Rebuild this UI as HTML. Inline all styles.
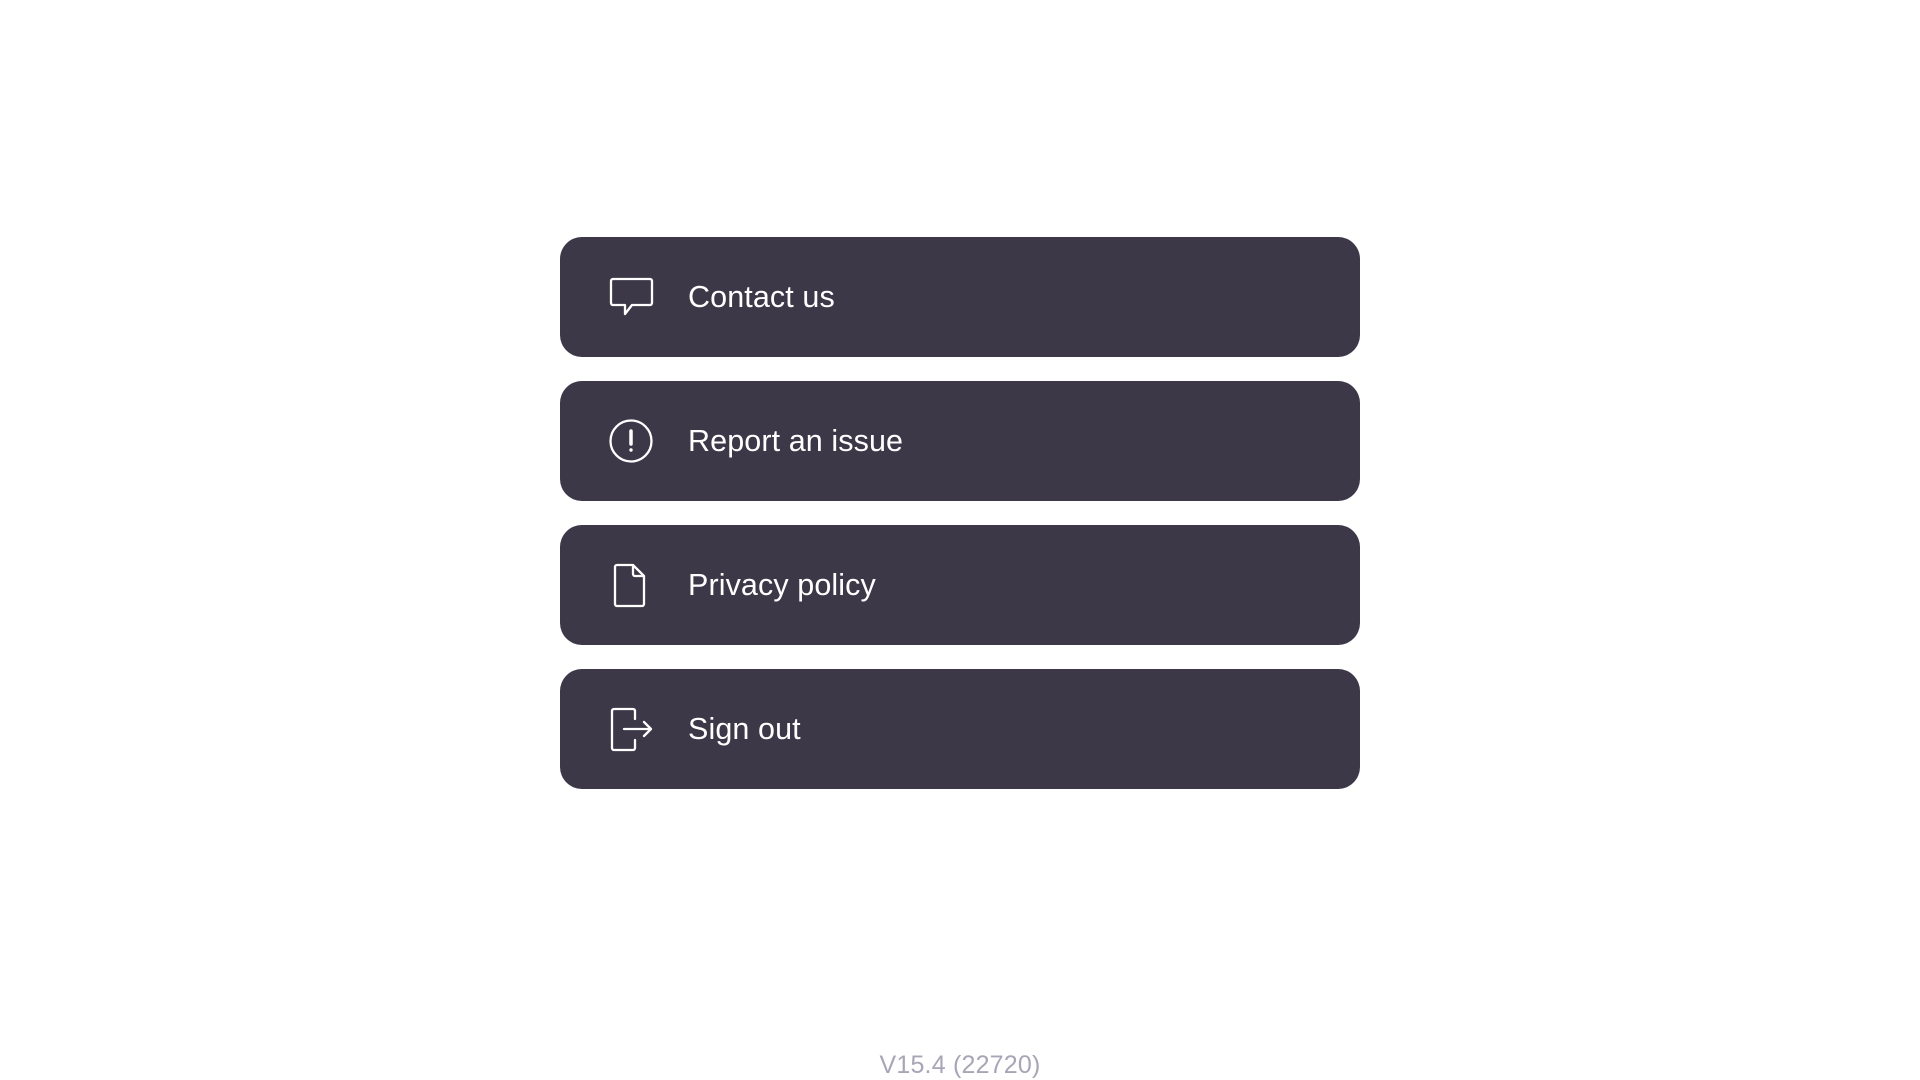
<!DOCTYPE html>
<html><head><meta charset="utf-8"><style>
html,body{margin:0;padding:0;width:1920px;height:1080px;background:#fff;overflow:hidden;font-family:"Liberation Sans",sans-serif}
.b{position:absolute;left:560px;width:800px;height:120px;background:#3c3848;border-radius:22px;color:#fff}
.b svg{position:absolute;left:48px;top:37px}
.b span{position:absolute;left:128px;top:0px;line-height:120px;font-size:30.5px;letter-spacing:0.1px}
.v{position:absolute;left:0;width:1920px;top:1051px;text-align:center;font-size:25px;color:#a8a5b6;letter-spacing:0.2px}
</style></head><body>
<div class="b" style="top:237px"><svg width="46" height="48" viewBox="0 0 46 48" fill="none" stroke="#fff" stroke-width="2.3" stroke-linejoin="round"><path d="M5 5h37a2 2 0 0 1 2 2v22a2 2 0 0 1-2 2H24l-7 9v-9H5a2 2 0 0 1-2-2V7a2 2 0 0 1 2-2z"/></svg><span>Contact us</span></div>
<div class="b" style="top:381px"><svg width="46" height="48" viewBox="0 0 46 48" fill="none" stroke="#fff" stroke-width="2.3"><circle cx="23" cy="23" r="20.5"/><path d="M23 13v13" stroke-width="3.5" stroke-linecap="round"/><circle cx="23" cy="32" r="1.7" fill="#fff" stroke="none"/></svg><span>Report an issue</span></div>
<div class="b" style="top:525px"><svg width="46" height="48" viewBox="0 0 46 48" fill="none" stroke="#fff" stroke-width="2.3" stroke-linejoin="round"><path d="M9 3h16l11 11v28a2 2 0 0 1-2 2H9a2 2 0 0 1-2-2V5a2 2 0 0 1 2-2z"/><path d="M25 3v9a2 2 0 0 0 2 2h9"/></svg><span>Privacy policy</span></div>
<div class="b" style="top:669px"><svg width="46" height="48" viewBox="0 0 46 48" fill="none" stroke="#fff" stroke-width="2.3" stroke-linejoin="round" stroke-linecap="round"><path d="M27 13V5a2 2 0 0 0-2-2H6a2 2 0 0 0-2 2v37a2 2 0 0 0 2 2h19a2 2 0 0 0 2-2v-8"/><path d="M16 23h27M36 16l7 7-7 7"/></svg><span>Sign out</span></div>
<div class="v">V15.4 (22720)</div>
</body></html>
